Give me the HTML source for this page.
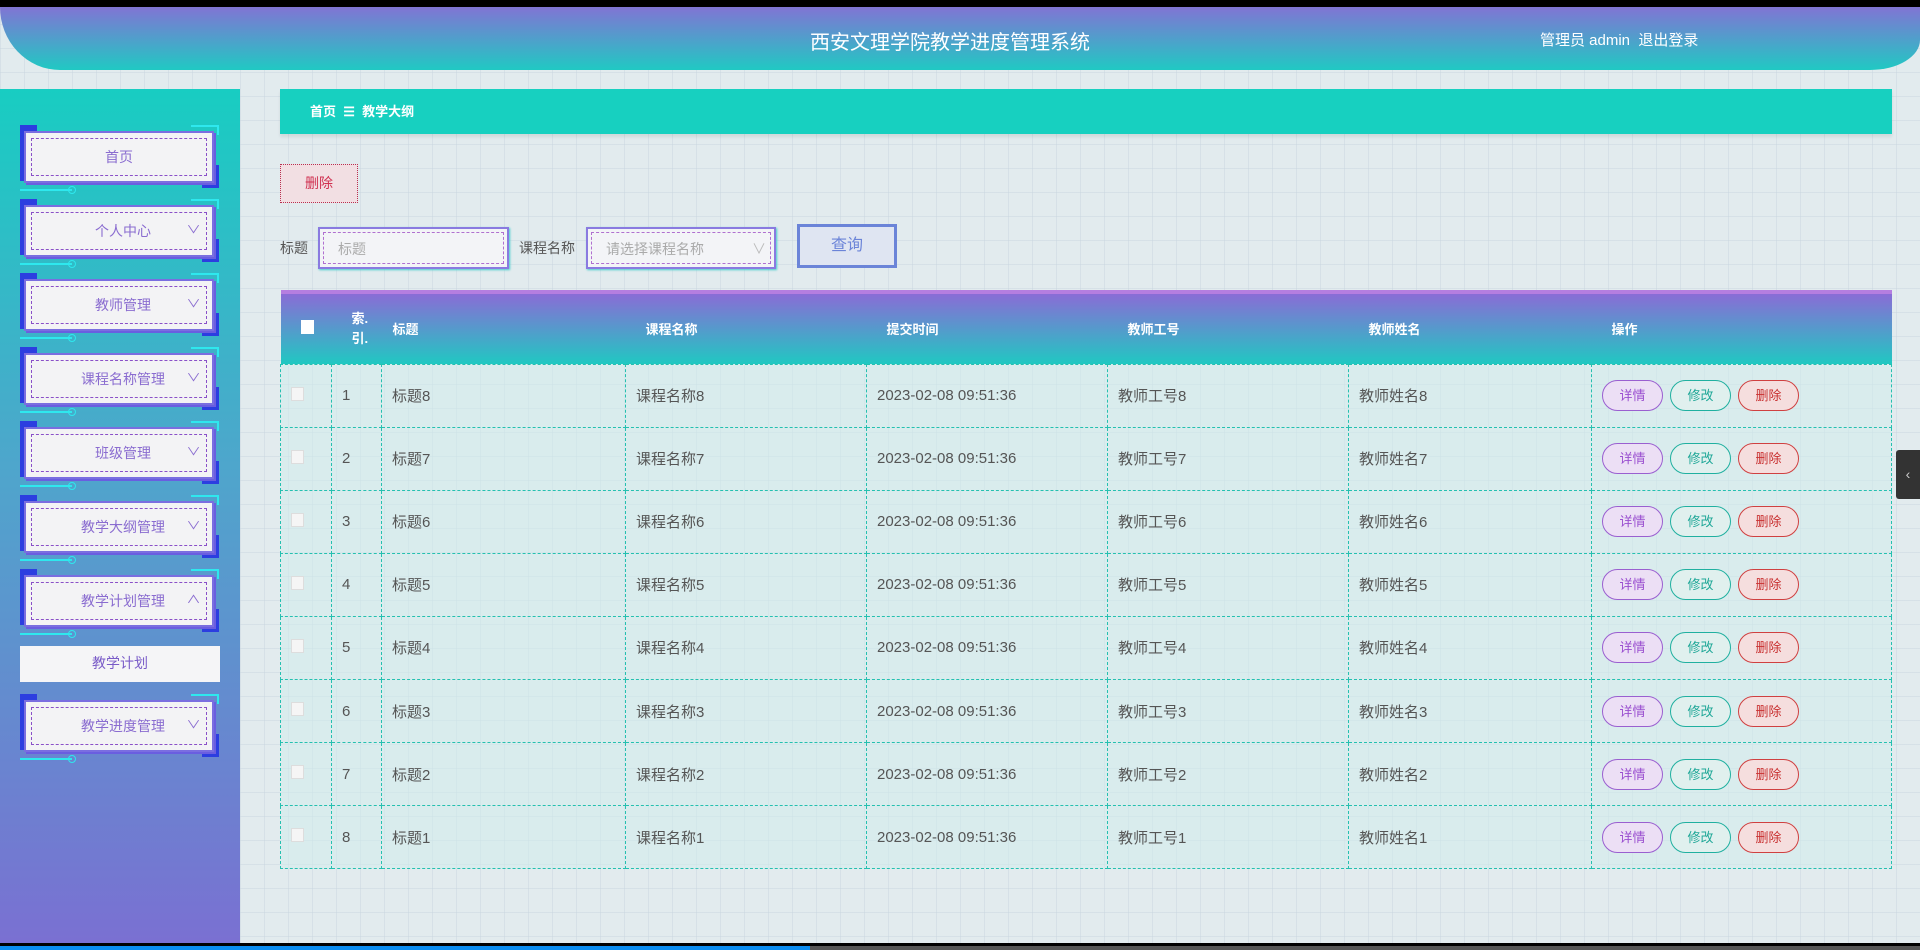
<!DOCTYPE html>
<html><head><meta charset="utf-8">
<style>
*{margin:0;padding:0;box-sizing:border-box}
body{width:1920px;height:950px;overflow:hidden;position:relative;font-family:"Liberation Sans","Noto Sans CJK SC",sans-serif;
background-color:#e2ebee;
background-image:linear-gradient(rgba(200,212,222,.45) 1px,transparent 1px),linear-gradient(90deg,rgba(200,212,222,.45) 1px,transparent 1px);
background-size:24px 24px}
.topbar{position:absolute;left:0;top:0;width:1920px;height:7px;background:#000}
.header{position:absolute;left:0;top:7px;width:1920px;height:63px;background:linear-gradient(#8174d4,#20c9c3);border-radius:0 0 50px 60px/0 0 30px 63px}
.title{position:absolute;left:0;width:1900px;text-align:center;top:19px;color:#fff;font-size:20px}
.user{position:absolute;left:1540px;top:22px;color:#fff;font-size:15px}
.side{position:absolute;left:0;top:89px;width:240px;height:854px;background:linear-gradient(#18cdc2,#4fa5cc 45%,#7a70d2)}
.item{position:absolute;left:20px;width:200px;height:64px}
.item .box{position:absolute;left:4px;top:6px;width:190px;height:52px;background:#f3f3f5;border:2px solid #7a6ee0;box-shadow:2px 2px 0 #6a5ee0}
.item .box:after{content:"";position:absolute;left:5px;top:5px;right:5px;bottom:5px;border:1px dashed #8a50c8}
.item .tl{position:absolute;left:0;top:0;width:17px;height:14px;background:#2c3ee0}
.item .tl2{position:absolute;left:0;top:0;width:4px;height:56px;background:#2c3ee0}
.item .br{position:absolute;left:182px;top:40px;width:17px;height:23px;background:#2c3ee0}
.item .tr{position:absolute;left:171px;top:0;width:28px;border-top:2px solid #2ee8ee;border-right:2px solid #2ee8ee;height:10px}
.item .bl{position:absolute;left:0;top:64px;width:52px;height:2px;background:#2ee8ee}
.item .bl:after{content:"";position:absolute;right:-4px;top:-3px;width:6px;height:6px;border:1px solid #2ee8ee;border-radius:50%}
.item .t{position:absolute;left:8px;width:190px;top:6px;height:52px;line-height:52px;text-align:center;color:#8a6cd0;font-size:14px;z-index:2}
.item .c{position:absolute;left:168px;top:6px;line-height:50px;color:#8a6cd0;font-size:11px;z-index:2;transform:scaleX(1.3)}
.sub{position:absolute;left:20px;top:646px;width:200px;height:36px;background:#f5f5f7;text-align:center;line-height:34px;color:#7a5cc8;font-size:14px}
.crumb{position:absolute;left:280px;top:89px;width:1612px;height:45px;background:#17d0c0;box-shadow:0 3px 3px rgba(0,0,0,.08);color:#fff;font-size:13px;font-weight:bold;line-height:45px;padding-left:30px}
.del{position:absolute;left:280px;top:164px;width:78px;height:39px;background:#f2dfe3;border:1px dotted #b83050;color:#d03050;font-size:14px;text-align:center;line-height:37px}
.lbl{position:absolute;top:238px;font-size:14px;color:#555}
.inp{position:absolute;top:227px;height:42px;background:#f3f4f7;border:2px solid #8a7ae0;box-shadow:1px 1px 2px #4cc}
.inp:after{content:"";position:absolute;left:3px;top:3px;right:3px;bottom:3px;border:1px dashed #b070d0}
.inp span{position:absolute;left:18px;top:10px;color:#aaa;font-size:14px}
.btn{position:absolute;left:797px;top:224px;width:100px;height:44px;background:#dfe5f2;border:3px solid #6b84d8;color:#6b84d8;font-size:16px;text-align:center;line-height:38px}
table{position:absolute;left:280px;top:290px;width:1612px;border-collapse:collapse;border-top:4px solid #b57ee0}
th{height:72px;background:linear-gradient(#8a6cd6,#20c8c2);color:#fff;font-size:13px;text-align:left;padding-left:20px;font-weight:bold}
td{height:63.1px;border:1px dashed #25c0b0;background:rgba(210,236,236,.55);color:#555;font-size:15px;padding-left:10px}
.cb{display:inline-block;width:13px;height:14px;background:#f5f5f5;border:1px solid #ddd}
.a{display:inline-block;width:61px;height:31px;border-radius:16px;border:1px solid;text-align:center;line-height:29px;font-size:13px;margin-right:7px}
.a1{color:#9a4fd0;border-color:#9a5fd0;background:#ecdff5}
.a2{color:#20a898;border-color:#20b0a0;background:#e0f0ee}
.a3{color:#c83030;border-color:#d04040;background:#f5dede}
.tab{position:absolute;left:1896px;top:450px;width:24px;height:49px;background:#333;color:#ccc;font-size:14px;text-align:center;line-height:49px;border-radius:3px 0 0 3px}
.bot{position:absolute;left:0;top:943px;width:1920px;height:7px;background:#000}
.prog{position:absolute;left:0;top:946px;width:810px;height:4px;background:#0a8cf0}
.prog2{position:absolute;left:810px;top:946px;width:1110px;height:4px;background:#555}
</style></head><body>
<div class="topbar"></div>
<div class="header"><div class="title">西安文理学院教学进度管理系统</div><div class="user">管理员 admin &nbsp;退出登录</div></div>
<div class="side"></div>
<div class="item" style="top:125px"><div class="tl"></div><div class="tl2"></div><div class="tr"></div><div class="br"></div><div class="bl"></div><div class="box"></div><div class="t" style="left:4px">首页</div></div>
<div class="item" style="top:199px"><div class="tl"></div><div class="tl2"></div><div class="tr"></div><div class="br"></div><div class="bl"></div><div class="box"></div><div class="t">个人中心</div><div class="c">∨</div></div>
<div class="item" style="top:273px"><div class="tl"></div><div class="tl2"></div><div class="tr"></div><div class="br"></div><div class="bl"></div><div class="box"></div><div class="t">教师管理</div><div class="c">∨</div></div>
<div class="item" style="top:347px"><div class="tl"></div><div class="tl2"></div><div class="tr"></div><div class="br"></div><div class="bl"></div><div class="box"></div><div class="t">课程名称管理</div><div class="c">∨</div></div>
<div class="item" style="top:421px"><div class="tl"></div><div class="tl2"></div><div class="tr"></div><div class="br"></div><div class="bl"></div><div class="box"></div><div class="t">班级管理</div><div class="c">∨</div></div>
<div class="item" style="top:495px"><div class="tl"></div><div class="tl2"></div><div class="tr"></div><div class="br"></div><div class="bl"></div><div class="box"></div><div class="t">教学大纲管理</div><div class="c">∨</div></div>
<div class="item" style="top:569px"><div class="tl"></div><div class="tl2"></div><div class="tr"></div><div class="br"></div><div class="bl"></div><div class="box"></div><div class="t">教学计划管理</div><div class="c">∧</div></div>
<div class="sub">教学计划</div>
<div class="item" style="top:694px"><div class="tl"></div><div class="tl2"></div><div class="tr"></div><div class="br"></div><div class="bl"></div><div class="box"></div><div class="t">教学进度管理</div><div class="c">∨</div></div>

<div class="crumb">首页 &nbsp;☰ &nbsp;教学大纲</div>
<div class="del">删除</div>
<div class="lbl" style="left:280px">标题</div>
<div class="inp" style="left:318px;width:191px"><span>标题</span></div>
<div class="lbl" style="left:519px">课程名称</div>
<div class="inp" style="left:586px;width:190px"><span>请选择课程名称</span><span style="left:164px;color:#bbb">∨</span></div>
<div class="btn">查询</div>

<table>
<tr><th style="width:51px;padding-left:20px"><span class="cb" style="background:#fff;border:none"></span></th><th style="width:50px;padding-left:20px;line-height:20px">索.<br>引.</th><th style="width:244px;padding-left:11px">标题</th><th style="width:241px">课程名称</th><th style="width:241px">提交时间</th><th style="width:241px">教师工号</th><th style="width:243px">教师姓名</th><th>操作</th></tr>
<tr><td><span class="cb"></span></td><td>1</td><td>标题8</td><td>课程名称8</td><td>2023-02-08 09:51:36</td><td>教师工号8</td><td>教师姓名8</td><td><span class="a a1">详情</span><span class="a a2">修改</span><span class="a a3">删除</span></td></tr>
<tr><td><span class="cb"></span></td><td>2</td><td>标题7</td><td>课程名称7</td><td>2023-02-08 09:51:36</td><td>教师工号7</td><td>教师姓名7</td><td><span class="a a1">详情</span><span class="a a2">修改</span><span class="a a3">删除</span></td></tr>
<tr><td><span class="cb"></span></td><td>3</td><td>标题6</td><td>课程名称6</td><td>2023-02-08 09:51:36</td><td>教师工号6</td><td>教师姓名6</td><td><span class="a a1">详情</span><span class="a a2">修改</span><span class="a a3">删除</span></td></tr>
<tr><td><span class="cb"></span></td><td>4</td><td>标题5</td><td>课程名称5</td><td>2023-02-08 09:51:36</td><td>教师工号5</td><td>教师姓名5</td><td><span class="a a1">详情</span><span class="a a2">修改</span><span class="a a3">删除</span></td></tr>
<tr><td><span class="cb"></span></td><td>5</td><td>标题4</td><td>课程名称4</td><td>2023-02-08 09:51:36</td><td>教师工号4</td><td>教师姓名4</td><td><span class="a a1">详情</span><span class="a a2">修改</span><span class="a a3">删除</span></td></tr>
<tr><td><span class="cb"></span></td><td>6</td><td>标题3</td><td>课程名称3</td><td>2023-02-08 09:51:36</td><td>教师工号3</td><td>教师姓名3</td><td><span class="a a1">详情</span><span class="a a2">修改</span><span class="a a3">删除</span></td></tr>
<tr><td><span class="cb"></span></td><td>7</td><td>标题2</td><td>课程名称2</td><td>2023-02-08 09:51:36</td><td>教师工号2</td><td>教师姓名2</td><td><span class="a a1">详情</span><span class="a a2">修改</span><span class="a a3">删除</span></td></tr>
<tr><td><span class="cb"></span></td><td>8</td><td>标题1</td><td>课程名称1</td><td>2023-02-08 09:51:36</td><td>教师工号1</td><td>教师姓名1</td><td><span class="a a1">详情</span><span class="a a2">修改</span><span class="a a3">删除</span></td></tr>
</table>
<div class="tab">‹</div>
<div class="bot"></div><div class="prog"></div><div class="prog2"></div>
</body></html>
